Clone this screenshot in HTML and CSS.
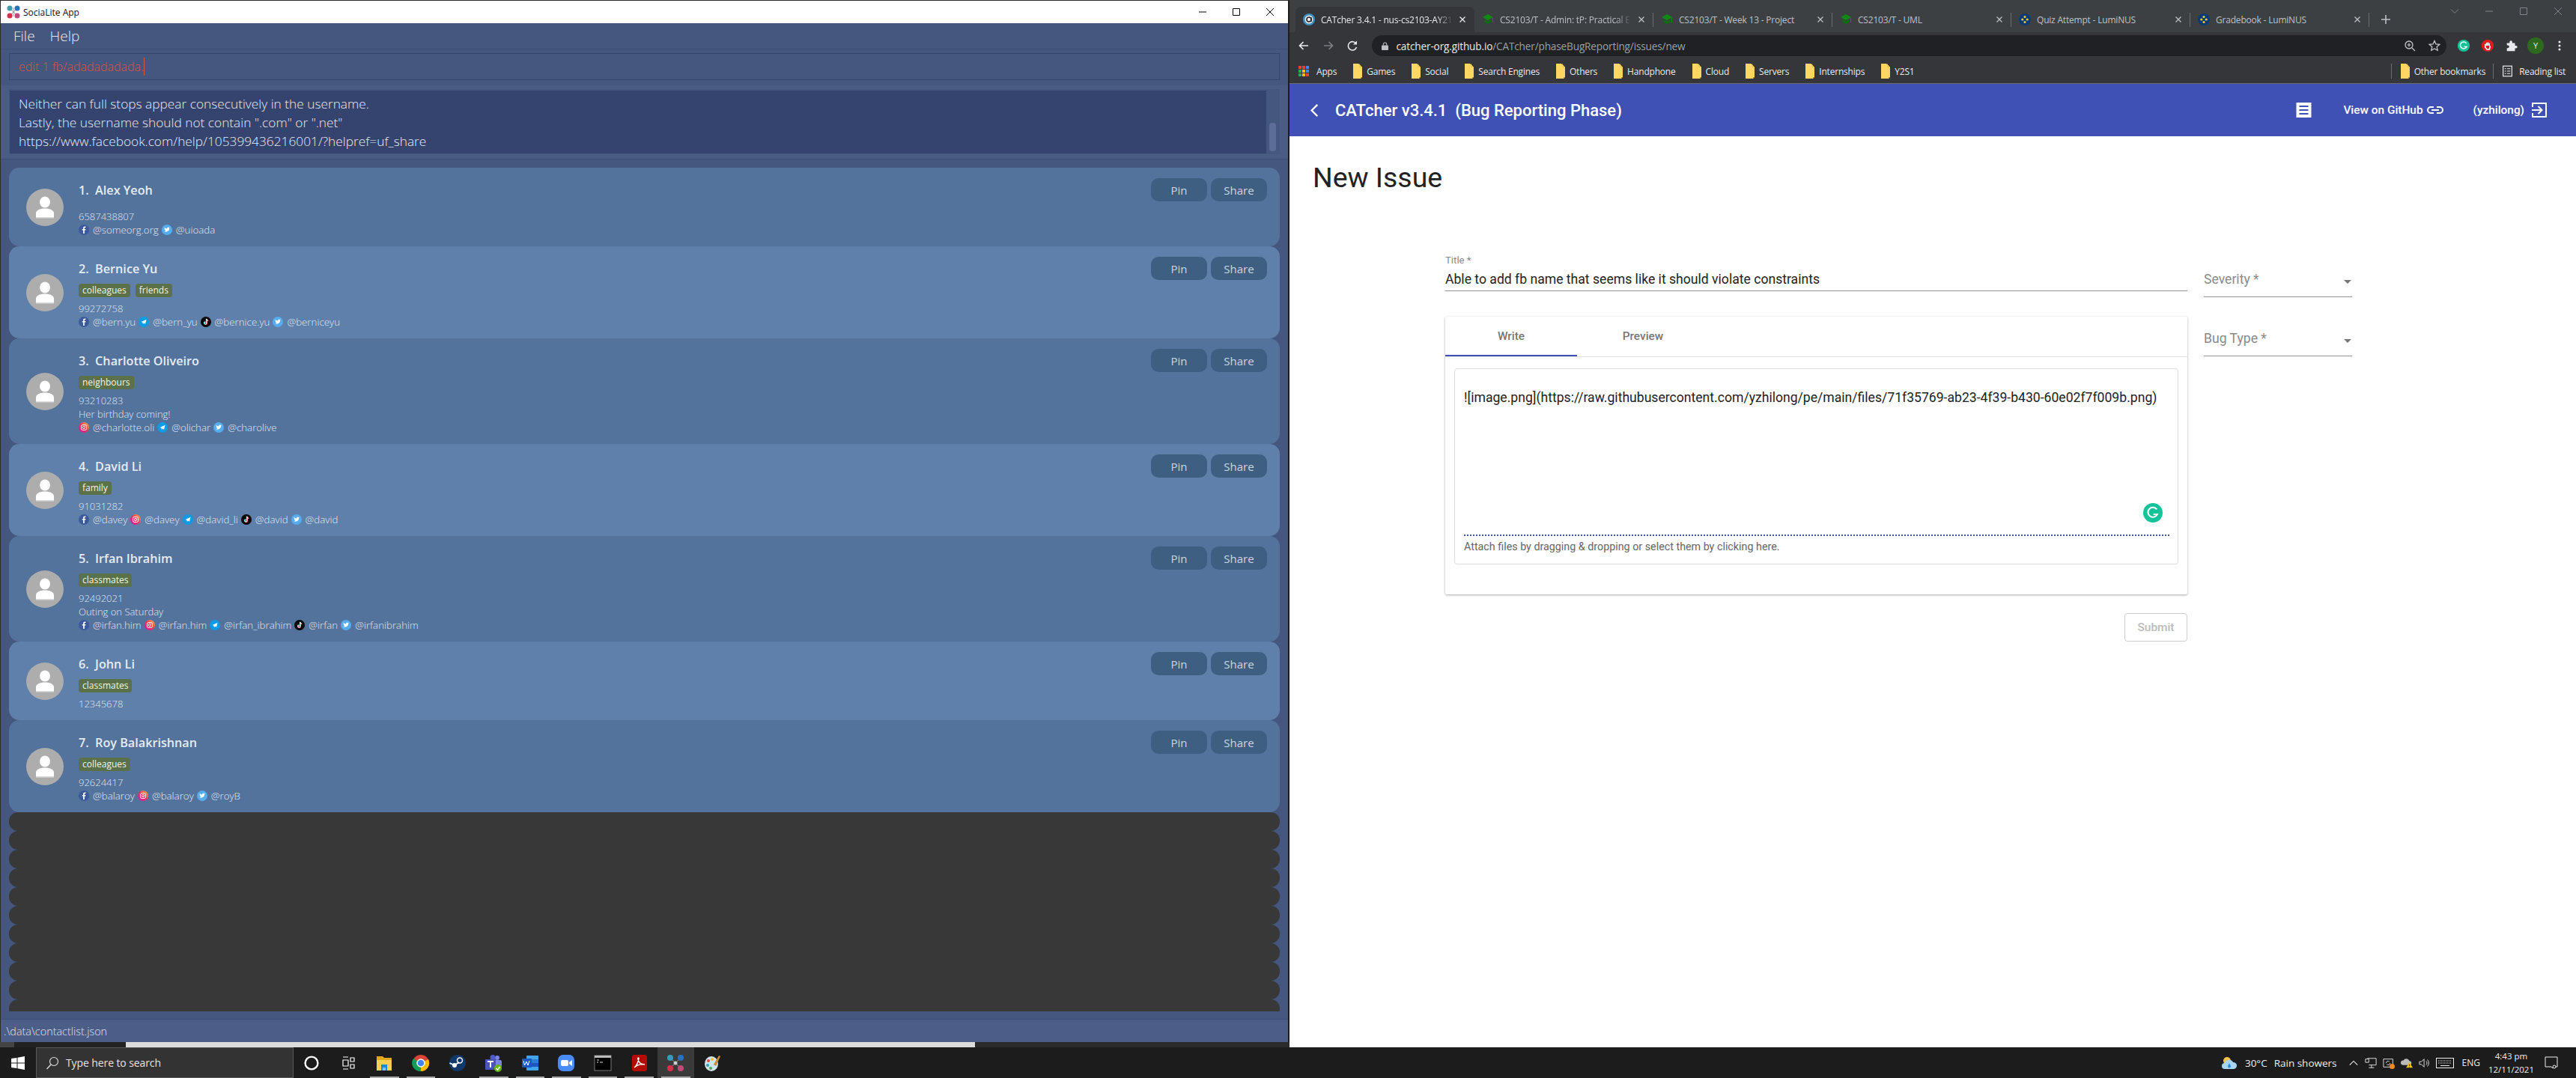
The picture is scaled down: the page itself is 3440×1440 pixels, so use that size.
FILE: index.html
```html
<!DOCTYPE html>
<html>
  <head>
    <title>SociaLite and CATcher</title>
    <link rel="stylesheet" href="styles.css">
  </head>
  <body>
    <svg class="sprite" width="0" height="0">
      <defs>
        <linearGradient id="ig" x1="0" y1="1" x2="1" y2="0">
          <stop offset="0" stop-color="#c913b9"/><stop offset=".5" stop-color="#f0325a"/><stop offset="1" stop-color="#fcc23c"/>
        </linearGradient>
        <symbol id="avatar" viewBox="0 0 50 50">
          <circle cx="25" cy="25" r="25" fill="#adadad"/>
          <ellipse cx="25" cy="18" rx="7" ry="7.5" fill="#fff"/>
          <path d="M13 39v-6c0-4 5-6.500 12-6.500s12 2.500 12 6.500v6z" fill="#fff"/>
          <rect x="13" y="38" width="24" height="1.500" fill="#ddd"/>
        </symbol>
        <symbol id="fb" viewBox="0 0 14 14">
          <circle cx="7" cy="7" r="7" fill="#3b5a9e"/>
          <path d="M7.800 12V7.600h1.500l.2-1.700H7.800V4.900c0-.5.200-.8.800-.8h.9V2.600C9.300 2.500 8.800 2.500 8.300 2.500c-1.300 0-2.200.8-2.200 2.200v1.200H4.700v1.700h1.400V12z" fill="#fff"/>
        </symbol>
        <symbol id="tw" viewBox="0 0 14 14">
          <circle cx="7" cy="7" r="7" fill="#55acee"/>
          <path d="M11 4.300c-.3.100-.6.200-.9.200.3-.2.600-.5.700-.9-.3.200-.7.300-1 .4a1.600 1.600 0 0 0-2.700 1.400C5.800 5.300 4.600 4.700 3.800 3.700c-.4.800-.2 1.600.5 2.100-.2 0-.5-.1-.7-.2 0 .8.500 1.400 1.300 1.600-.2.100-.5.100-.7 0 .2.600.8 1.100 1.500 1.100-.7.500-1.500.8-2.400.700 2.800 1.700 7-.1 6.900-4.200.4-.1.600-.4.800-.7z" fill="#fff"/>
        </symbol>
        <symbol id="tg" viewBox="0 0 14 14">
          <circle cx="7" cy="7" r="7" fill="#0d9be6"/>
          <path d="M10.500 3.800 3.600 7l1.800.7.600 2.200 1.100-1.300 1.900 1.200z" fill="#fff"/>
        </symbol>
        <symbol id="tt" viewBox="0 0 14 14">
          <circle cx="7" cy="7" r="7" fill="#050505"/>
          <path d="M8 3v5.600a1.500 1.500 0 1 1-1.500-1.500" fill="none" stroke="#25f4ee" stroke-width="1.300" transform="translate(-.5 -.3)"/>
          <path d="M8 3v5.600a1.500 1.500 0 1 1-1.500-1.500M8 3.400c.2 1 .9 1.700 2 1.800" fill="none" stroke="#fe2c55" stroke-width="1.300" transform="translate(.4 .3)"/>
          <path d="M8 3v5.600a1.500 1.500 0 1 1-1.500-1.500M8 3.400c.2 1 .9 1.700 2 1.800" fill="none" stroke="#fff" stroke-width="1"/>
        </symbol>
        <symbol id="ig-logo" viewBox="0 0 14 14">
          <circle cx="7" cy="7" r="7" fill="url(#ig)"/>
          <rect x="3.500" y="3.500" width="7" height="7" rx="2" fill="none" stroke="#fff"/>
          <circle cx="7" cy="7" r="1.600" fill="none" stroke="#fff"/>
        </symbol>
        <symbol id="folder" viewBox="0 0 12 20">
          <path d="M0 0h7l5 5v13l-2 2H0z" fill="#fdd663"/>
          <path d="M10 20v-2h2z" fill="#b08c2c"/>
          <path d="M8 0l4 5H8z" fill="#f2c84f"/>
        </symbol>
        <symbol id="lumi" viewBox="0 0 16 16">
          <circle cx="8" cy="8" r="8" fill="#0b3a78"/>
          <circle cx="8" cy="4.500" r="1.600" fill="#f4c430"/><circle cx="4.800" cy="8" r="1.600" fill="#f4c430"/>
          <circle cx="11.200" cy="8" r="1.600" fill="#f4c430"/><circle cx="8" cy="11.500" r="1.600" fill="#f4c430"/>
        </symbol>
        <symbol id="cap" viewBox="0 0 16 16">
          <path d="M8 1 1 5l7 4 7-4z" fill="#0f8a12"/>
          <path d="M3.500 8v3.500L8 14l4.500-2.500V8L8 10.500z" fill="#0b6f0e"/>
          <path d="M14 6v6h1V5.500z" fill="#0f8a12"/>
        </symbol>
        <symbol id="x" viewBox="0 0 10 10">
          <path d="M1.500 1.500l7 7M8.500 1.500l-7 7" stroke="currentColor" stroke-width="1.300" fill="none"/>
        </symbol>
      </defs>
    </svg>

    <div class="desktop">
      <div class="left-pane">
        <div class="app-window">
          <div class="titlebar">
            <svg class="app-icon" viewBox="0 0 18 18">
              <path d="M4 4 14 14M14 4 4 14M9 3v12" stroke="#999" fill="none"/>
              <circle cx="4" cy="4" r="3.500" fill="#3a9ab0"/><circle cx="14" cy="4" r="3.500" fill="#2a70c0"/>
              <circle cx="4" cy="14" r="3.500" fill="#d8304a"/><circle cx="14" cy="14" r="3.500" fill="#c04a7a"/>
            </svg>
            <span class="app-name">SociaLite App</span>
            <div class="win-btns">
              <svg viewBox="0 0 12 12"><path d="M1 6h10" stroke="#000" fill="none"/></svg>
              <svg viewBox="0 0 12 12"><path d="M1.500 1.500h9v9h-9z" stroke="#000" fill="none"/></svg>
              <svg viewBox="0 0 12 12"><path d="M1 1l10 10M11 1 1 11" stroke="#000" fill="none"/></svg>
            </div>
          </div>

          <div class="menubar"><span>File</span><span>Help</span></div>

          <div class="command-wrap">
            <div class="command-box"><span class="command-text">edit 1 fb/adadadadada.</span><i class="caret"></i></div>
          </div>

          <div class="result-wrap">
            <div class="result-box">
              <div class="result-text">
                <p>Neither can full stops appear consecutively in the username.</p>
                <p>Lastly, the username should not contain ".com" or ".net"</p>
                <p>https://www.facebook.com/help/105399436216001/?helpref=uf_share</p>
              </div>
              <div class="result-scroll"><i></i></div>
            </div>
          </div>

          <div class="person-list">
            <div class="person">
              <svg class="avatar"><use href="#avatar"/></svg>
              <div class="person-info">
                <div class="person-name no-tags">1.&nbsp; Alex Yeoh</div>
                <div class="line">6587438807</div>
                <div class="line socials">
                  <svg class="soc"><use href="#fb"/></svg><span>@someorg.org</span>
                  <svg class="soc"><use href="#tw"/></svg><span>@uioada</span>
                </div>
              </div>
              <div class="person-btns"><button>Pin</button><button>Share</button></div>
            </div>

            <div class="person">
              <svg class="avatar"><use href="#avatar"/></svg>
              <div class="person-info">
                <div class="person-name">2.&nbsp; Bernice Yu</div>
                <div class="tags"><span>colleagues</span><span>friends</span></div>
                <div class="line">99272758</div>
                <div class="line socials">
                  <svg class="soc"><use href="#fb"/></svg><span>@bern.yu</span>
                  <svg class="soc"><use href="#tg"/></svg><span>@bern_yu</span>
                  <svg class="soc"><use href="#tt"/></svg><span>@bernice.yu</span>
                  <svg class="soc"><use href="#tw"/></svg><span>@berniceyu</span>
                </div>
              </div>
              <div class="person-btns"><button>Pin</button><button>Share</button></div>
            </div>

            <div class="person">
              <svg class="avatar"><use href="#avatar"/></svg>
              <div class="person-info">
                <div class="person-name">3.&nbsp; Charlotte Oliveiro</div>
                <div class="tags"><span>neighbours</span></div>
                <div class="line">93210283</div>
                <div class="line">Her birthday coming!</div>
                <div class="line socials">
                  <svg class="soc"><use href="#ig-logo"/></svg><span>@charlotte.oli</span>
                  <svg class="soc"><use href="#tg"/></svg><span>@olichar</span>
                  <svg class="soc"><use href="#tw"/></svg><span>@charolive</span>
                </div>
              </div>
              <div class="person-btns"><button>Pin</button><button>Share</button></div>
            </div>

            <div class="person">
              <svg class="avatar"><use href="#avatar"/></svg>
              <div class="person-info">
                <div class="person-name">4.&nbsp; David Li</div>
                <div class="tags"><span>family</span></div>
                <div class="line">91031282</div>
                <div class="line socials">
                  <svg class="soc"><use href="#fb"/></svg><span>@davey</span>
                  <svg class="soc"><use href="#ig-logo"/></svg><span>@davey</span>
                  <svg class="soc"><use href="#tg"/></svg><span>@david_li</span>
                  <svg class="soc"><use href="#tt"/></svg><span>@david</span>
                  <svg class="soc"><use href="#tw"/></svg><span>@david</span>
                </div>
              </div>
              <div class="person-btns"><button>Pin</button><button>Share</button></div>
            </div>

            <div class="person">
              <svg class="avatar"><use href="#avatar"/></svg>
              <div class="person-info">
                <div class="person-name">5.&nbsp; Irfan Ibrahim</div>
                <div class="tags"><span>classmates</span></div>
                <div class="line">92492021</div>
                <div class="line">Outing on Saturday</div>
                <div class="line socials">
                  <svg class="soc"><use href="#fb"/></svg><span>@irfan.him</span>
                  <svg class="soc"><use href="#ig-logo"/></svg><span>@irfan.him</span>
                  <svg class="soc"><use href="#tg"/></svg><span>@irfan_ibrahim</span>
                  <svg class="soc"><use href="#tt"/></svg><span>@irfan</span>
                  <svg class="soc"><use href="#tw"/></svg><span>@irfanibrahim</span>
                </div>
              </div>
              <div class="person-btns"><button>Pin</button><button>Share</button></div>
            </div>

            <div class="person">
              <svg class="avatar"><use href="#avatar"/></svg>
              <div class="person-info">
                <div class="person-name">6.&nbsp; John Li</div>
                <div class="tags"><span>classmates</span></div>
                <div class="line">12345678</div>
              </div>
              <div class="person-btns"><button>Pin</button><button>Share</button></div>
            </div>

            <div class="person">
              <svg class="avatar"><use href="#avatar"/></svg>
              <div class="person-info">
                <div class="person-name">7.&nbsp; Roy Balakrishnan</div>
                <div class="tags"><span>colleagues</span></div>
                <div class="line">92624417</div>
                <div class="line socials">
                  <svg class="soc"><use href="#fb"/></svg><span>@balaroy</span>
                  <svg class="soc"><use href="#ig-logo"/></svg><span>@balaroy</span>
                  <svg class="soc"><use href="#tw"/></svg><span>@royB</span>
                </div>
              </div>
              <div class="person-btns"><button>Pin</button><button>Share</button></div>
            </div>

            <div class="empty-row"></div><div class="empty-row"></div><div class="empty-row"></div>
            <div class="empty-row"></div><div class="empty-row"></div><div class="empty-row"></div>
            <div class="empty-row"></div><div class="empty-row"></div><div class="empty-row"></div>
            <div class="empty-row"></div><div class="empty-row"></div>
          </div>

          <div class="statusbar">.\data\contactlist.json</div>
        </div>
        <div class="under-strip"><i class="s1"></i><i class="s2"></i><i class="s3"></i><i class="s4"></i></div>
      </div>

      <div class="browser">
        <div class="tabstrip">
          <div class="tab active">
            <svg class="favicon" viewBox="0 0 16 16"><circle cx="8" cy="8" r="8" fill="#3b8fc4"/><circle cx="8" cy="8" r="5.500" fill="#e8eaed"/><circle cx="8" cy="8" r="3" fill="none" stroke="#222" stroke-width="1.600"/><path d="M11 5v6" stroke="#222" stroke-width="1.400"/></svg>
            <span class="tab-title fade">CATcher 3.4.1 - nus-cs2103-AY21</span>
            <svg class="tab-x"><use href="#x"/></svg>
          </div>
          <div class="tab">
            <svg class="favicon"><use href="#cap"/></svg>
            <span class="tab-title fade">CS2103/T - Admin: tP: Practical E</span>
            <svg class="tab-x"><use href="#x"/></svg>
          </div>
          <div class="tab">
            <svg class="favicon"><use href="#cap"/></svg>
            <span class="tab-title">CS2103/T - Week 13 - Project</span>
            <svg class="tab-x"><use href="#x"/></svg>
          </div>
          <div class="tab">
            <svg class="favicon"><use href="#cap"/></svg>
            <span class="tab-title">CS2103/T - UML</span>
            <svg class="tab-x"><use href="#x"/></svg>
          </div>
          <div class="tab">
            <svg class="favicon"><use href="#lumi"/></svg>
            <span class="tab-title">Quiz Attempt - LumiNUS</span>
            <svg class="tab-x"><use href="#x"/></svg>
          </div>
          <div class="tab">
            <svg class="favicon"><use href="#lumi"/></svg>
            <span class="tab-title">Gradebook - LumiNUS</span>
            <svg class="tab-x"><use href="#x"/></svg>
          </div>
          <svg class="new-tab" viewBox="0 0 14 14"><path d="M7 1v12M1 7h12" stroke="#bdc1c6" stroke-width="1.600" fill="none"/></svg>
          <div class="chrome-btns">
            <svg viewBox="0 0 12 12"><path d="M1 3.500 6 8.500l5-5" stroke="#80868b" fill="none"/></svg>
            <svg viewBox="0 0 12 12"><path d="M1 6h10" stroke="#80868b" fill="none"/></svg>
            <svg viewBox="0 0 12 12"><path d="M1.500 1.500h9v9h-9z" stroke="#80868b" fill="none"/></svg>
            <svg viewBox="0 0 12 12"><path d="M1 1l10 10M11 1 1 11" stroke="#80868b" fill="none"/></svg>
          </div>
        </div>

        <div class="toolbar">
          <div class="nav-btn"><svg viewBox="0 0 16 16"><path d="M14 8H3M7.500 3 2.500 8l5 5" stroke="#e8eaed" stroke-width="1.700" fill="none"/></svg></div>
          <div class="nav-btn"><svg viewBox="0 0 16 16"><path d="M2 8h11M8.500 3l5 5-5 5" stroke="#7b7e82" stroke-width="1.700" fill="none"/></svg></div>
          <div class="nav-btn"><svg viewBox="0 0 16 16"><path d="M13 5.500A5.700 5.700 0 1 0 13.500 10" stroke="#e8eaed" stroke-width="1.600" fill="none"/><path d="M14 1.500v5h-5z" fill="#e8eaed"/></svg></div>
          <div class="omnibox">
            <svg class="lock" viewBox="0 0 10 12"><path d="M2.500 5V3.500a2.500 2.500 0 0 1 5 0V5" stroke="#bdc1c6" fill="none" stroke-width="1.200"/><rect y="5" width="10" height="7" rx="1" fill="#bdc1c6"/></svg>
            <span class="url"><b>catcher-org.github.io</b>/CATcher/phaseBugReporting/issues/new</span>
            <svg class="omni-ico" viewBox="0 0 16 16"><circle cx="7" cy="7" r="5" stroke="#c4c7ca" stroke-width="1.300" fill="none"/><path d="m11 11 4 4M7 4.500v5M4.500 7h5" stroke="#c4c7ca" stroke-width="1.200"/></svg>
            <svg class="omni-ico" viewBox="0 0 16 16"><path d="m8 1.500 2 4.400 4.800.5-3.600 3.200 1 4.700L8 11.900l-4.200 2.400 1-4.700L1.200 6.400 6 5.900z" stroke="#c4c7ca" stroke-width="1.300" fill="none"/></svg>
          </div>
          <div class="ext"><svg viewBox="0 0 20 20"><circle cx="10" cy="10" r="9" fill="#15c39a"/><path d="M14 6.500a5 5 0 1 0 .5 5H10.500" stroke="#fff" stroke-width="1.600" fill="none"/></svg></div>
          <div class="ext"><svg viewBox="0 0 20 20"><circle cx="10" cy="10" r="9" fill="#e31b1b"/><path d="M6.500 10V7.500M8.500 10V5.500M10.500 10V5M12.500 10V6.500M6.500 9v3.500l2.500 3h3.500l1-3V10" stroke="#fff" stroke-width="1.700" fill="none"/></svg></div>
          <div class="ext"><svg viewBox="0 0 20 20"><path d="M3 6h4V4.500a2 2 0 0 1 4 0V6h4v4h1.500a2 2 0 0 1 0 4H15v4H3v-4.500h1.500a2 2 0 0 0 0-4H3z" fill="#e8eaed"/></svg></div>
          <div class="ext"><span class="profile">Y</span></div>
          <div class="ext"><svg viewBox="0 0 20 20"><circle cx="10" cy="4.500" r="1.700" fill="#e8eaed"/><circle cx="10" cy="10" r="1.700" fill="#e8eaed"/><circle cx="10" cy="15.500" r="1.700" fill="#e8eaed"/></svg></div>
        </div>

        <div class="bookmarks">
          <div class="bm bm-apps">
            <svg class="apps-grid" viewBox="0 0 14 14">
              <rect width="4" height="4" fill="#ea4335"/><rect x="5" width="4" height="4" fill="#ea4335"/><rect x="10" width="4" height="4" fill="#4285f4"/>
              <rect y="5" width="4" height="4" fill="#34a853"/><rect x="5" y="5" width="4" height="4" fill="#fbbc05"/><rect x="10" y="5" width="4" height="4" fill="#4285f4"/>
              <rect y="10" width="4" height="4" fill="#34a853"/><rect x="5" y="10" width="4" height="4" fill="#fbbc05"/><rect x="10" y="10" width="4" height="4" fill="#ea4335"/>
            </svg>Apps
          </div>
          <div class="bm"><svg class="bm-folder"><use href="#folder"/></svg>Games</div>
          <div class="bm"><svg class="bm-folder"><use href="#folder"/></svg>Social</div>
          <div class="bm"><svg class="bm-folder"><use href="#folder"/></svg>Search Engines</div>
          <div class="bm"><svg class="bm-folder"><use href="#folder"/></svg>Others</div>
          <div class="bm"><svg class="bm-folder"><use href="#folder"/></svg>Handphone</div>
          <div class="bm"><svg class="bm-folder"><use href="#folder"/></svg>Cloud</div>
          <div class="bm"><svg class="bm-folder"><use href="#folder"/></svg>Servers</div>
          <div class="bm"><svg class="bm-folder"><use href="#folder"/></svg>Internships</div>
          <div class="bm"><svg class="bm-folder"><use href="#folder"/></svg>Y2S1</div>
          <div class="bm-right">
            <div class="bm bm-sep"><svg class="bm-folder"><use href="#folder"/></svg>Other bookmarks</div>
            <div class="bm bm-sep">
              <svg class="read-ico" viewBox="0 0 14 16"><rect x=".7" y=".7" width="12.600" height="14.600" fill="none" stroke="#e8eaed" stroke-width="1.300"/><path d="M3 4.500h2M3 8h2M3 11.500h2M6.500 4.500h4.500M6.500 8h4.500M6.500 11.500h4.500" stroke="#e8eaed" stroke-width="1.300"/></svg>
              Reading list
            </div>
          </div>
        </div>

        <div class="cat-header">
          <svg class="cat-back" viewBox="0 0 14 20"><path d="M11.500 2 3.500 10l8 8" stroke="#fff" stroke-width="2.400" fill="none"/></svg>
          <span class="cat-title">CATcher v3.4.1 &nbsp;(Bug Reporting Phase)</span>
          <svg class="cat-doc" viewBox="0 0 20 22"><path d="M0 1h20v20H0z" fill="#fff"/><path d="M4 6h12M4 11h12M4 16h12" stroke="#3f51b5" stroke-width="2.200"/></svg>
          <span class="cat-link">View on GitHub</span>
          <svg class="cat-chain" viewBox="0 0 24 12"><path d="M10 2H6a4 4 0 0 0 0 8h4M14 2h4a4 4 0 0 1 0 8h-4M7 6h10" stroke="#fff" stroke-width="2" fill="none"/></svg>
          <span class="cat-user">(yzhilong)</span>
          <svg class="cat-login" viewBox="0 0 20 20"><path d="M1 6V1h18v18H1v-5" stroke="#fff" stroke-width="2" fill="none"/><path d="M0 10h13M8.500 5l5 5-5 5" stroke="#fff" stroke-width="2" fill="none"/></svg>
        </div>

        <div class="cat-page">
          <h1>New Issue</h1>
          <div class="issue-form">
            <div class="form-main">
              <div class="title-field">
                <label>Title *</label>
                <div class="title-value">Able to add fb name that seems like it should violate constraints</div>
              </div>
              <div class="md-card">
                <div class="md-tabs">
                  <div class="md-tab selected">Write</div>
                  <div class="md-tab">Preview</div>
                </div>
                <div class="md-box">
                  <div class="md-text">![image.png](https://raw.githubusercontent.com/yzhilong/pe/main/files/71f35769-ab23-4f39-b430-60e02f7f009b.png)</div>
                  <svg class="grammarly" viewBox="0 0 20 20"><circle cx="10" cy="10" r="10" fill="#15c39a"/><path d="M14 6.500a5 5 0 1 0 .5 5H10.500" stroke="#fff" stroke-width="1.600" fill="none"/></svg>
                  <div class="md-hint">Attach files by dragging &amp; dropping or select them by clicking here.</div>
                </div>
              </div>
              <div class="form-actions"><button class="submit-btn">Submit</button></div>
            </div>
            <div class="form-side">
              <div class="select-field">Severity *<i class="select-arrow"></i></div>
              <div class="select-field">Bug Type *<i class="select-arrow"></i></div>
            </div>
          </div>
        </div>
      </div>
    </div>

    <div class="taskbar">
      <svg class="start" viewBox="0 0 18 18"><path d="M0 3l7.500-1v6.500H0zM8.500 1.800 18 0v8.500H8.500zM0 9.500h7.500V16L0 15zM8.500 9.500H18V18l-9.500-1.800z" fill="#fff"/></svg>
      <div class="task-search">
        <svg viewBox="0 0 18 18"><circle cx="11" cy="7" r="5.500" stroke="#ddd" stroke-width="1.200" fill="none"/><path d="M7 11 1.500 17" stroke="#ddd" stroke-width="1.300"/></svg>
        <span>Type here to search</span>
      </div>
      <div class="task-item"><svg viewBox="0 0 20 20"><circle cx="10" cy="10" r="7" stroke="#fff" stroke-width="2" fill="none"/></svg></div>
      <div class="task-item narrow"><svg viewBox="0 0 20 20"><path d="M3 2h7M3 18h7M3 6h7v8H3zM13 3h5v5h-5zM13 12h5v5h-5z" stroke="#fff" stroke-width="1.200" fill="none"/></svg></div>
      <div class="task-item on"><svg viewBox="0 0 24 24"><path d="M2 3h8l2 2h10v3H2z" fill="#e3a71b"/><path d="M2 8h20v14H2z" fill="#f7cf52"/><path d="M8 14h8v8H8z" fill="#1a86d8"/><path d="M10 18h4v4h-4z" fill="#7cc4f5"/></svg></div>
      <div class="task-item on"><svg viewBox="0 0 24 24"><circle cx="12" cy="12" r="11" fill="#db4437"/><path d="M12 12 22 7A11 11 0 0 1 12 23z" fill="#fbbc05"/><path d="M12 12 12 23A11 11 0 0 1 2 6z" fill="#0f9d58"/><circle cx="12" cy="12" r="5" fill="#4285f4" stroke="#fff" stroke-width="1.500"/></svg></div>
      <div class="task-item"><svg viewBox="0 0 24 24"><circle cx="12" cy="12" r="11" fill="#10386b"/><circle cx="15" cy="8.500" r="3.500" fill="none" stroke="#fff" stroke-width="1.500"/><circle cx="8" cy="15" r="3" fill="#fff"/><path d="M1.500 12 8 15l6-4" stroke="#fff" stroke-width="1.800" fill="none"/></svg></div>
      <div class="task-item on"><svg viewBox="0 0 24 24"><circle cx="17" cy="5" r="3" fill="#7b83eb"/><rect x="12" y="8" width="11" height="10" rx="2" fill="#7b83eb"/><circle cx="11" cy="4.500" r="3.500" fill="#5059c9"/><rect x="1" y="7" width="14" height="14" rx="1" fill="#4b53bc"/><path d="M4 10h8M8 10v8" stroke="#fff" stroke-width="2"/><circle cx="18" cy="19" r="5" fill="#6bb700"/><path d="m15.500 19 2 2 3-4" stroke="#fff" stroke-width="1.500" fill="none"/></svg></div>
      <div class="task-item on"><svg viewBox="0 0 24 24"><rect x="7" y="2" width="16" height="20" rx="1" fill="#41a5ee"/><path d="M7 7h16v5H7z" fill="#2b7cd3"/><path d="M7 12h16v5H7z" fill="#185abd"/><rect x="1" y="6" width="13" height="12" rx="1" fill="#185abd"/><path d="m3 9 1.500 6L7 10l2 5 2-6" stroke="#fff" fill="none"/></svg></div>
      <div class="task-item on"><svg viewBox="0 0 24 24"><rect x="1" y="1" width="22" height="22" rx="7" fill="#4a8cff"/><rect x="5" y="8" width="10" height="8" rx="2" fill="#fff"/><path d="m16 11 4-3v8l-4-3z" fill="#fff"/></svg></div>
      <div class="task-item on"><svg viewBox="0 0 24 24"><rect x="1" y="2" width="22" height="20" fill="#000" stroke="#777"/><rect x="1" y="2" width="22" height="3" fill="#bbb"/><path d="M4 8h3M4 11h2M8 11h4" stroke="#ddd"/></svg></div>
      <div class="task-item on"><svg viewBox="0 0 24 24"><rect x="2" y="1" width="20" height="22" rx="3" fill="#b30b00"/><path d="M5 18c3-2 5-7 6-12 0-2-2-1-1 1 1 4 4 7 9 7-4-1-10 0-14 4z" stroke="#fff" stroke-width="1.400" fill="none"/></svg></div>
      <div class="task-item on current"><svg viewBox="0 0 24 24"><path d="M6 6l12 12M18 6 6 18" stroke="#999" fill="none"/><circle cx="12" cy="12" r="2.500" fill="#ccc"/><circle cx="5" cy="5" r="4" fill="#2f9ebd"/><circle cx="19" cy="5" r="4" fill="#2a70c0"/><circle cx="5" cy="19" r="4" fill="#d8304a"/><circle cx="19" cy="19" r="4" fill="#c04a7a"/></svg></div>
      <div class="task-item"><svg viewBox="0 0 24 24"><ellipse cx="11" cy="13" rx="9" ry="10" fill="#cfe3ee"/><circle cx="7" cy="9" r="2" fill="#e0483e"/><circle cx="12" cy="7" r="2" fill="#f2c230"/><circle cx="6" cy="15" r="2" fill="#2f9ebd"/><circle cx="10" cy="19" r="2" fill="#52a850"/><path d="M14 14 21 2l2 1-6 13z" fill="#c98a3a"/></svg></div>

      <div class="tray">
        <svg class="tray-weather" viewBox="0 0 22 18"><circle cx="8" cy="6" r="5" fill="#f5c242"/><path d="M5 17a4 4 0 0 1 0-8 6 6 0 0 1 11-1 4.500 4.500 0 0 1 1 9z" fill="#a6d4f7"/><path d="M11 9.500c-1.500 2-2 3-2 4a2 2 0 0 0 4 0c0-1-.5-2-2-4z" fill="#2a8fe0"/></svg>
        <span class="tray-temp">30°C</span>
        <span class="tray-cond">Rain showers</span>
        <svg class="tray-ico chev" viewBox="0 0 16 16"><path d="m2 11 6-6 6 6" stroke="#eee" stroke-width="1.200" fill="none"/></svg>
        <svg class="tray-ico" viewBox="0 0 18 16"><path d="M4 1h13v10H6M10 11v4M6 15h8M1 2h5v5H1z" stroke="#eee" fill="none"/></svg>
        <svg class="tray-ico" viewBox="0 0 18 18"><path d="M1 3h14v12H1z" stroke="#eee" fill="none"/><path d="M5 9a3 3 0 0 1 5-2M11 9a3 3 0 0 1-5 2" stroke="#eee" fill="none"/><circle cx="14" cy="14" r="4" fill="#f08a1d"/></svg>
        <svg class="tray-ico" viewBox="0 0 18 16"><path d="M3 11a3.500 3.500 0 0 1 1-7 5 5 0 0 1 9 1 3 3 0 0 1 0 6z" fill="#bbb"/><path d="M13 7l5 8H8z" fill="#f6c100"/><path d="M13 10v2.500M13 13.500v.7" stroke="#222"/></svg>
        <svg class="tray-ico" viewBox="0 0 18 16"><path d="M1 6h3l4-4v12l-4-4H1zM11 5a4 4 0 0 1 0 6M13 3a7 7 0 0 1 0 10" stroke="#eee" fill="none"/></svg>
        <svg class="tray-kbd" viewBox="0 0 24 14"><rect x=".5" y=".5" width="23" height="13" stroke="#eee" fill="none"/><path d="M3 4h18M3 7h18" stroke="#eee" stroke-dasharray="1 1"/><path d="M6 10.500h12" stroke="#eee"/></svg>
        <span class="tray-lang">ENG</span>
        <div class="tray-clock"><span>4:43 pm</span><span>12/11/2021</span></div>
        <svg class="tray-notif" viewBox="0 0 18 18"><path d="M1 1h16v13h-4l-2 2-2-2H1z" stroke="#eee" fill="none"/><circle cx="13" cy="14" r="2" fill="#1c1c1c" stroke="#eee"/></svg>
      </div>
    </div>
  </body>
</html>
```

FILE: styles.css
```css
html, body { margin: 0; padding: 0; }
body { width: 3440px; height: 1440px; overflow: hidden; background: #1c1c1c; font-family: "Open Sans", sans-serif; }
p { margin: 0; }
.sprite { position: absolute; }

.desktop { display: flex; height: 1399px; }

/* socialite window */
.left-pane { width: 1722px; flex: none; display: flex; flex-direction: column; background: #222; }
.app-window { height: 1392px; box-sizing: border-box; border-top: 1px solid #2b2b2b; border-left: 1px solid #2b2b2b; border-right: 2px solid #1d1d1d; background: #45577f; display: flex; flex-direction: column; }

.titlebar { height: 30px; flex: none; background: #fff; display: flex; align-items: center; padding-left: 8px; }
.app-icon { width: 18px; height: 18px; }
.app-name { font-size: 12px; color: #111; margin-left: 4px; }
.win-btns { margin-left: auto; display: flex; gap: 33px; padding-right: 18px; }
.win-btns svg { width: 12px; height: 12px; }

.menubar { height: 34px; flex: none; border-bottom: 1px solid #3c4d76; display: flex; align-items: center; padding-left: 17px; gap: 20px; font-size: 19px; font-weight: 300; color: #e4e8f0; }

.command-wrap { height: 48px; flex: none; box-sizing: border-box; padding: 5px 11px 7px 11px; }
.command-box { height: 36px; box-sizing: border-box; border: 1px solid #34446f; padding-left: 12px; display: flex; align-items: center; }
.command-text { font-size: 16px; font-weight: 300; color: #d2563f; }
.caret { width: 1px; height: 24px; background: #d2563f; }

.result-wrap { height: 99px; flex: none; box-sizing: border-box; padding: 5px 11px 0 11px; background: #4a5b84; border-bottom: 1px solid #3c4d76; }
.result-box { height: 87px; box-sizing: border-box; border: 1px solid #45577f; border-top-width: 2px; display: flex; }
.result-text { flex: 1; background: #34446f; padding: 5px 0 0 12px; color: #e6ebf3; font-size: 17.300px; font-weight: 300; line-height: 25px; overflow: hidden; }
.result-scroll { width: 17px; flex: none; background: #45577f; position: relative; }
.result-scroll i { position: absolute; left: 4px; top: 43px; width: 9px; height: 38px; border-radius: 4px; background: #5d6d98; }

.person-list { flex: 1; margin: 11px 11px 10px 11px; overflow: hidden; }
.person { display: flex; align-items: center; border-radius: 14px; padding: 18px 17px 13px 23px; position: relative; }
.person:nth-child(odd) { background: #53739d; }
.person:nth-child(even) { background: #5e80aa; }
.avatar { width: 50px; height: 50px; flex: none; align-self: center; margin-top: -5px; }
.person-info { flex: 1; margin-left: 20px; }
.person-name { font-size: 16.200px; font-weight: 600; line-height: 24px; color: #e6ecf4; }
.person-name.no-tags { margin-bottom: 14px; }
.tags { display: flex; gap: 7px; margin: 8px 0 6px; }
.tags span { height: 18px; line-height: 18px; padding: 0 5px; border-radius: 4px; background: #5a7149; color: #f2f5e4; font-size: 12px; font-weight: 400; }
.line { font-size: 13px; font-weight: 300; line-height: 18px; color: #e0e6ee; }
.socials { display: flex; align-items: center; font-size: 13.300px; }
.soc { width: 14px; height: 14px; flex: none; margin-right: 5px; }
.socials span { margin-right: 4px; }
.person-btns { position: absolute; top: 14px; right: 17px; display: flex; gap: 5px; }
.person-btns button { width: 75px; height: 31px; border: none; border-radius: 10px; background: #3f5f82; color: #c7d6e4; font-family: "Open Sans", sans-serif; font-size: 15px; padding: 0; }
.empty-row { height: 25px; border-radius: 12px; background: #383838; }

.statusbar { height: 30px; flex: none; background: #4c5d87; border-top: 1px solid #3c4d76; padding-left: 4px; line-height: 32px; font-size: 14.400px; font-weight: 300; color: #dde3ee; }

.under-strip { height: 7px; display: flex; }
.under-strip i { display: block; height: 7px; }
.s1 { width: 19px; background: #444; }
.s2 { width: 149px; background: #222; }
.s3 { width: 1134px; background: #dcdcdc; }
.s4 { flex: 1; background: #2a2a2a; }

/* chrome */
.browser { flex: 1; display: flex; flex-direction: column; background: #fff; min-width: 0; }
.tabstrip { height: 43px; flex: none; box-sizing: border-box; padding: 9px 0 0 8px; background: #3c4043; display: flex; position: relative; }
.tab { width: 239px; height: 34px; flex: none; box-sizing: border-box; padding: 0 10px; display: flex; align-items: center; gap: 8px; color: #bdc1c6; position: relative; }
.tab::after { content: ""; position: absolute; right: 0; top: 8px; height: 19px; width: 1px; background: #6a6d70; }
.tab.active { background: #35363a; border-radius: 8px 8px 0 0; color: #e8eaed; }
.tab.active::after { display: none; }
.favicon { width: 16px; height: 16px; flex: none; }
.tab-title { flex: 1; font-size: 12px; letter-spacing: -.2px; white-space: nowrap; }
.tab-title.fade { -webkit-mask-image: linear-gradient(to right, #000 88%, transparent); mask-image: linear-gradient(to right, #000 88%, transparent); }
.tab-x { width: 10px; height: 10px; flex: none; margin-right: 1px; }
.new-tab { width: 14px; height: 14px; margin: 10px 0 0 15px; flex: none; }
.chrome-btns { position: absolute; right: 18px; top: 9px; display: flex; gap: 34px; }
.chrome-btns svg { width: 12px; height: 12px; }

.toolbar { height: 36px; flex: none; background: #35363a; display: flex; align-items: center; padding-left: 3px; }
.nav-btn { width: 32.500px; height: 32px; display: flex; align-items: center; justify-content: center; flex: none; }
.nav-btn svg { width: 16px; height: 16px; }
.omnibox { flex: 1; height: 28px; margin: 0 7px 0 9px; border-radius: 14px; background: #202124; display: flex; align-items: center; padding: 0 8px 0 13px; }
.lock { width: 9px; height: 11px; flex: none; }
.url { flex: 1; margin-left: 11px; font-size: 13.600px; color: #9aa0a6; white-space: nowrap; letter-spacing: -.15px; }
.url b { font-weight: 400; color: #e8eaed; }
.omni-ico { width: 16px; height: 16px; margin-left: 17px; flex: none; }
.ext { width: 32px; height: 32px; flex: none; display: flex; align-items: center; justify-content: center; }
.ext svg { width: 18px; height: 18px; }
.toolbar .ext:last-child { margin-right: 6px; }
.profile { width: 22px; height: 22px; border-radius: 50%; background: #2d6a1f; color: #e8eaed; font-size: 11px; text-align: center; line-height: 22px; }

.bookmarks { height: 33px; flex: none; box-sizing: border-box; background: #35363a; border-bottom: 1px solid #6a6b6e; display: flex; align-items: center; padding-left: 12px; font-size: 12px; color: #e8eaed; letter-spacing: -.2px; }
.bm { display: flex; align-items: center; margin-right: 22px; white-space: nowrap; }
.apps-grid { width: 14px; height: 14px; margin-right: 10px; }
.bm-folder { width: 12px; height: 20px; margin-right: 6px; flex: none; }
.bm-right { margin-left: auto; display: flex; }
.bm-sep { border-left: 1px solid #6a6d70; margin: 0; padding: 0 10px 0 12px; height: 20px; }
.bm-sep:last-child { padding-right: 14px; }
.read-ico { width: 13px; height: 16px; margin-right: 9px; }

/* catcher page, the browser is zoomed to 110% so sizes look a bit off */
.cat-header { height: 70px; flex: none; background: #3f51b5; color: #fff; display: flex; align-items: center; padding-left: 26px; font-family: Roboto, sans-serif; font-weight: 500; }
.cat-back { width: 14px; height: 19px; flex: none; }
.cat-title { font-size: 22px; margin-left: 21px; }
.cat-doc { width: 21px; height: 22px; margin-left: auto; flex: none; }
.cat-link { font-size: 15.400px; margin-left: 42px; }
.cat-chain { width: 26px; height: 12px; margin-left: 3px; }
.cat-user { font-size: 15.400px; margin-left: 38px; }
.cat-login { width: 20px; height: 20px; margin: 0 39px 0 10px; }

.cat-page { flex: 1; font-family: Roboto, sans-serif; padding: 35px 0 0 31px; }
.cat-page h1 { margin: 0; font-size: 37.400px; font-weight: 400; line-height: 40px; color: #222; }
.issue-form { display: flex; gap: 22px; margin: 84px 0 0 177px; }
.form-main { width: 991px; flex: none; }
.title-field { border-bottom: 1px solid #949494; padding-bottom: 5px; }
.title-field label { display: block; font-size: 13.200px; line-height: 14px; color: #8a8a8a; margin-bottom: 8px; }
.title-value { font-size: 17.600px; line-height: 20px; color: #222; }
.md-card { margin-top: 34px; height: 371px; background: #fff; box-shadow: 0 1px 3px rgba(0,0,0,.35); border-radius: 2px; }
.md-tabs { display: flex; height: 54px; box-sizing: border-box; border-bottom: 1px solid #dedede; }
.md-tab { width: 176px; text-align: center; font-size: 15.400px; font-weight: 500; line-height: 53px; color: #777; }
.md-tab.selected { border-bottom: 2px solid #3f51b5; height: 53px; box-sizing: border-box; }
.md-box { margin: 15px 12px 0; height: 262px; box-sizing: border-box; border: 1px solid #ddd; border-radius: 4px; padding: 28px 11px 0 12px; position: relative; }
.md-text { height: 195px; box-sizing: border-box; border-bottom: 2px dotted #3f51b5; font-size: 17.600px; line-height: 20px; color: #222; white-space: nowrap; }
.grammarly { position: absolute; right: 20px; top: 179px; width: 26px; height: 26px; }
.md-hint { font-size: 14.300px; line-height: 16px; margin-top: 6px; color: #666; }
.form-actions { display: flex; justify-content: flex-end; margin-top: 25px; }
.submit-btn { width: 84px; height: 38px; background: #fff; border: 1px solid #ccc; border-radius: 4px; color: #bbb; font-family: Roboto, sans-serif; font-size: 15.400px; font-weight: 500; padding: 0; }

.form-side { width: 198px; flex: none; padding-top: 22px; }
.select-field { border-bottom: 1px solid #949494; font-size: 17.600px; line-height: 20px; color: #8a8a8a; padding-bottom: 13px; margin-bottom: 45px; position: relative; }
.select-arrow { position: absolute; right: 1px; top: 11px; border-left: 5px solid transparent; border-right: 5px solid transparent; border-top: 5px solid #777; }

/* windows taskbar */
.taskbar { height: 41px; display: flex; align-items: center; background: #1c1c1c; color: #eee; }
.start { width: 18px; height: 18px; margin: 0 15px; flex: none; }
.task-search { width: 344px; height: 41px; box-sizing: border-box; background: #333; border: 1px solid #5a5a5a; display: flex; align-items: center; padding-left: 12px; flex: none; }
.task-search svg { width: 18px; height: 18px; }
.task-search span { margin-left: 9px; font-size: 14px; color: #e4e4e4; letter-spacing: -.1px; }
.task-item { width: 48.600px; height: 41px; flex: none; display: flex; align-items: center; justify-content: center; position: relative; }
.task-item svg { width: 24px; height: 24px; }
.task-item.narrow svg { width: 20px; height: 20px; }
.task-item.on::after { content: ""; position: absolute; left: 5px; right: 5px; bottom: 0; height: 2px; background: #aaa; }
.task-item.current { background: #3a3a3a; }

.tray { margin-left: auto; display: flex; align-items: center; font-size: 13.500px; color: #eee; }
.tray-weather { width: 22px; height: 18px; margin-right: 10px; }
.tray-cond { margin-left: 9px; }
.tray-ico { width: 16px; height: 16px; margin-left: 8px; }
.tray-ico.chev { width: 14px; height: 14px; margin-left: 15px; }
.tray-kbd { width: 24px; height: 14px; margin-left: 7px; }
.tray-lang { margin-left: 11px; font-size: 12px; }
.tray-clock { display: flex; flex-direction: column; align-items: center; margin-left: 11px; font-size: 11.500px; line-height: 18px; }
.tray-notif { width: 18px; height: 18px; margin: 0 24px 0 14px; }
```
